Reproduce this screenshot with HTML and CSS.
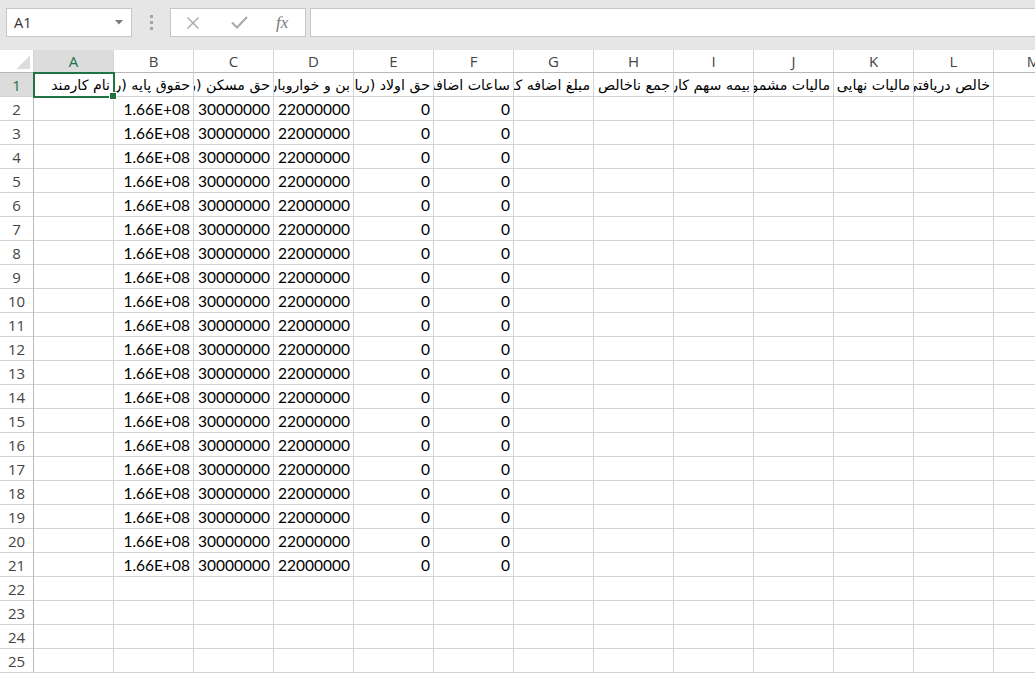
FILE: index.html
```html
<!DOCTYPE html>
<html lang="fa">
<head>
    <meta charset="UTF-8">
    <title>Book1 - Excel</title>
    <link rel="stylesheet" href="styles.css">
</head>
<body>
    <!-- name box + formula bar -->
    <div class="topbar">
        <div class="namebox">
            <span>A1</span>
            <svg class="caret" width="8" height="5" viewBox="0 0 8 5"><path d="M0 0h8L4 4.5z" fill="#7b7b7b"/></svg>
        </div>
        <div class="grip"><i></i><i></i><i></i></div>
        <div class="fxbox">
            <svg width="14" height="14" viewBox="0 0 14 14"><path d="M1.5 1.5l11 11M12.5 1.5l-11 11" stroke="#a8a8a8" stroke-width="1.4" fill="none"/></svg>
            <svg width="17" height="13" viewBox="0 0 17 13"><path d="M1 6.5l5 5L16 1" stroke="#a8a8a8" stroke-width="2" fill="none"/></svg>
            <span class="fx">fx</span>
        </div>
        <div class="formula"></div>
    </div>

    <!-- worksheet grid -->
    <div class="sheet" id="sheet">
        <div class="corner"><span class="tri"></span></div>
        <div class="colhead sel">A</div>
        <div class="colhead">B</div>
        <div class="colhead">C</div>
        <div class="colhead">D</div>
        <div class="colhead">E</div>
        <div class="colhead">F</div>
        <div class="colhead">G</div>
        <div class="colhead">H</div>
        <div class="colhead">I</div>
        <div class="colhead">J</div>
        <div class="colhead">K</div>
        <div class="colhead">L</div>
        <div class="colhead">M</div>

        <div class="rowhead sel">1</div>
        <div class="cell txt active">نام کارمند</div>
        <div class="cell txt">حقوق پایه (ریال)</div>
        <div class="cell txt">حق مسکن (ریال)</div>
        <div class="cell txt">بن و خواروبار (ریال)</div>
        <div class="cell txt">حق اولاد (ریال)</div>
        <div class="cell txt">ساعات اضافه کاری</div>
        <div class="cell txt">مبلغ اضافه کاری (ریال)</div>
        <div class="cell txt">جمع ناخالص (ریال)</div>
        <div class="cell txt">بیمه سهم کارگر (ریال)</div>
        <div class="cell txt">مالیات مشمول (ریال)</div>
        <div class="cell txt">مالیات نهایی</div>
        <div class="cell txt">خالص دریافتی (ریال)</div>
        <div class="cell"></div>
    </div>

    <script>
        // rows 2..21 hold the same employee figures, 22..25 are empty
        const values = ['', '1.66E+08', '30000000', '22000000', '0', '0'];
        const sheet = document.getElementById('sheet');

        for (let r = 2; r <= 25; r++) {
            let html = '<div class="rowhead">' + r + '</div>';
            for (let c = 0; c < 13; c++) {
                const v = r <= 21 && c < values.length ? values[c] : '';
                html += '<div class="cell">' + v + '</div>';
            }
            sheet.insertAdjacentHTML('beforeend', html);
        }
    </script>
</body>
</html>
```

FILE: styles.css
```css
* {
    margin: 0;
    padding: 0;
    box-sizing: border-box;
}

html, body {
    width: 100%;
    height: 100%;
    overflow: hidden;
    background-color: #fff;
}

/* top strip */
.topbar {
    height: 50px;
    background-color: #e6e6e6;
    display: flex;
    align-items: flex-start;
    padding: 8px 0 0 6px;
}

.namebox {
    width: 126px;
    height: 29px;
    background-color: #fff;
    border: 1px solid #c6c6c6;
    display: flex;
    align-items: center;
    justify-content: space-between;
    padding: 0 8px 0 7px;
    font-family: "Open Sans", sans-serif;
    font-size: 14.5px;
    color: #333;
}

.grip {
    width: 38px;
    height: 29px;
    display: flex;
    flex-direction: column;
    align-items: center;
    justify-content: center;
    gap: 3px;
}

.grip i {
    width: 3px;
    height: 3px;
    background-color: #a6a6a6;
}

.fxbox {
    width: 136px;
    height: 29px;
    background-color: #fff;
    border: 1px solid #c6c6c6;
    display: flex;
    align-items: center;
    padding-left: 15px;
    gap: 31px;
}

.fx {
    font-family: "Liberation Serif", serif;
    font-style: italic;
    font-size: 17px;
    color: #7a7a7a;
    margin-left: -3px;
}

.formula {
    flex: 1;
    height: 29px;
    margin-left: 4px;
    background-color: #fff;
    border: 1px solid #c6c6c6;
    border-right: none;
}

/* grid */
.sheet {
    display: grid;
    grid-template-columns: 34px repeat(13, 80px);
    grid-template-rows: 23px;
    grid-auto-rows: 24px;
}

.corner {
    border-right: 1px solid #d4d4d4;
    border-bottom: 1px solid #b8b8b8;
    display: flex;
    align-items: flex-end;
    justify-content: flex-end;
    padding: 0 3px 3px 0;
}

.tri {
    width: 14px;
    height: 14px;
    background: linear-gradient(to top left, #dcdcdc 50%, transparent 50%);
}

.colhead {
    border-right: 1px solid #d4d4d4;
    border-bottom: 1px solid #b8b8b8;
    display: flex;
    align-items: center;
    justify-content: center;
    font-family: "Open Sans", sans-serif;
    font-size: 15px;
    color: #444;
}

.rowhead {
    border-right: 1px solid #b8b8b8;
    border-bottom: 1px solid #d4d4d4;
    display: flex;
    align-items: center;
    justify-content: center;
    font-family: "Open Sans", sans-serif;
    font-size: 15px;
    color: #444;
    padding-top: 1px;
}

.colhead.sel, .rowhead.sel {
    background-color: #dcdcdc;
    color: #217346;
}

.cell {
    border-right: 1px solid #d4d4d4;
    border-bottom: 1px solid #d4d4d4;
    font-family: "Lato", sans-serif;
    font-size: 15.5px;
    line-height: 23px;
    padding: 1px 3px 0 2px;
    text-align: right;
    white-space: nowrap;
    overflow: hidden;
    color: #000;
}

.cell.txt {
    direction: rtl;
    text-align: right;
    font-family: "DejaVu Sans", sans-serif;
    font-size: 14.2px;
    padding-top: 1px;
}

/* selected cell */
.cell.active {
    position: relative;
    overflow: visible;
    outline: 2px solid #217346;
    outline-offset: -1px;
    z-index: 2;
}

.cell.active::after {
    content: "";
    position: absolute;
    right: -4px;
    bottom: -4px;
    width: 6px;
    height: 6px;
    background-color: #217346;
    border: 1px solid #fff;
}
```
